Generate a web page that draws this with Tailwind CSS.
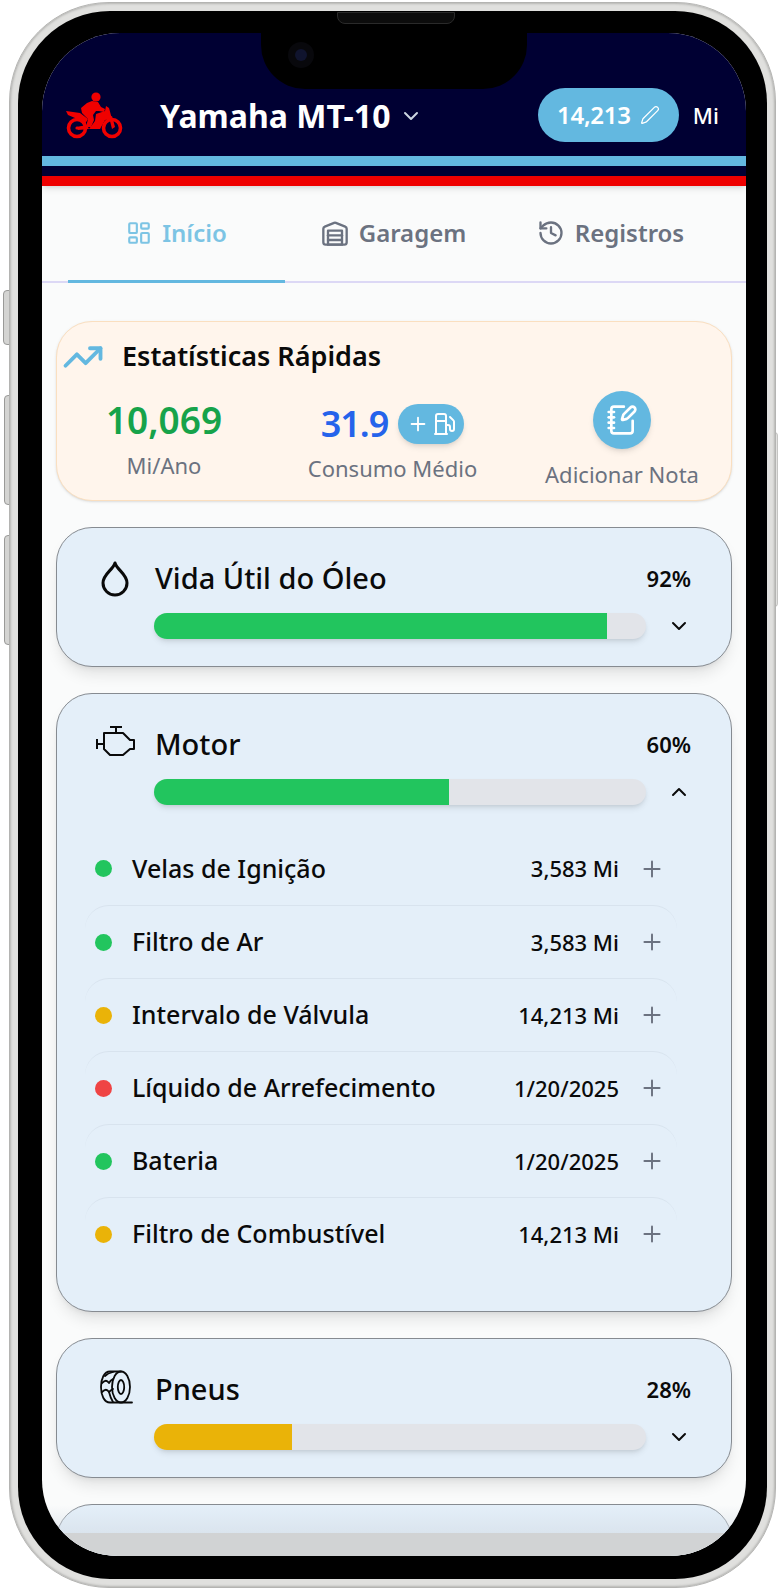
<!DOCTYPE html>
<html lang="pt-BR">
<head>
  <meta charset="UTF-8" />
  <title>Yamaha MT-10</title>
  <script src="https://cdn.jsdelivr.net/npm/@tailwindcss/browser@4"></script>
</head>
<body class="bg-white font-['Noto_Sans',sans-serif]">
<div class="relative w-[784px] h-[1590px] pl-[9px] pt-[2px] overflow-hidden">
  <!-- side buttons -->
  <div class="absolute left-[3px] top-[290px] w-[7px] h-[55px] rounded-l-sm bg-[#d4d4d2] border border-[#9a9a98]"></div>
  <div class="absolute left-[4px] top-[395px] w-[6px] h-[110px] rounded-l-sm bg-[#d4d4d2] border border-[#9a9a98]"></div>
  <div class="absolute left-[4px] top-[535px] w-[6px] h-[110px] rounded-l-sm bg-[#d4d4d2] border border-[#9a9a98]"></div>
  <div class="absolute left-[774px] top-[432px] w-[4px] h-[175px] rounded-r-sm bg-[#e2e2e0] border border-[#c4c4c2]"></div>

  <!-- phone -->
  <div class="relative w-[767px] h-[1586px] rounded-[100px] bg-[#e0e0de] border border-[#b4b4b2] p-[8px] shadow-[inset_0_0_3px_#8a8a88]">
    <div class="relative w-full h-full rounded-[92px] bg-black pl-[24px] pr-[21px] pt-[22px] pb-[23px]">
      <!-- speaker and notch -->
      <div class="absolute left-[319px] top-[1px] w-[118px] h-[12px] rounded-b-lg bg-[#0c0c0c] border border-[#2a2a2a] z-30"></div>
      <div class="absolute left-[243px] top-[22px] w-[266px] h-[56px] rounded-b-[44px] bg-black z-30"></div>
      <div class="absolute left-[270px] top-[31px] w-[26px] h-[26px] rounded-full bg-[#08080c] z-30 flex items-center justify-center">
        <div class="w-[12px] h-[12px] rounded-full bg-[#10142e]"></div>
      </div>

      <!-- screen -->
      <div class="relative w-full h-full rounded-t-[78px] rounded-b-[76px] overflow-hidden bg-[#fafbfb]">
        <header class="h-[123px] bg-[#000033] flex items-end pl-[17px] pr-[27px] pb-[14px]">
          <svg class="w-[70px] h-[55px] shrink-0" viewBox="0 0 70 55" fill="#f00000">
            <circle cx="37" cy="10" r="4.6"/>
            <path d="M33 14 L39 15 L42 20 L46 22 L45 25 L40 24 L37 24 L34 28 L35 33 L32 40 L27 40 L29 32 L23 26 L22 21 L28 16 Z"/>
            <path d="M37 27 L46 24 L47 19 L50 21 L53 32 L46 33 L41 42 L30 42 L36 34 Z"/>
            <path d="M7 24 L21 26 L29 32 L26 37 L16 31 L9 28 Z"/>
            <path d="M17 40 L28 38 L30 42 L19 43 Z"/>
            <circle cx="18" cy="41" r="8.5" fill="none" stroke="#f00000" stroke-width="3.6"/>
            <circle cx="53" cy="41" r="8.5" fill="none" stroke="#f00000" stroke-width="3.6"/>
            <circle cx="18" cy="41" r="1.6"/>
            <path d="M50 30 L53 29 L56 40 L53 42 Z"/>
          </svg>
          <div class="ml-[31px] h-[54px] -mb-[1px] flex items-center">
            <span class="text-[32px] leading-none font-bold text-white">Yamaha MT-10</span>
            <svg class="w-[24px] h-[24px] ml-[9px] text-[#cbd5e1]" viewBox="0 0 24 24" fill="none" stroke="currentColor" stroke-width="2" stroke-linecap="round" stroke-linejoin="round"><path d="m6 9 6 6 6-6"/></svg>
          </div>
          <div class="ml-auto flex items-center">
            <div class="w-[141px] h-[54px] rounded-full bg-[#63b8e0] flex items-center justify-center gap-[9px]">
              <span class="text-[24px] font-semibold text-white tracking-[-0.3px]">14,213</span>
              <svg class="w-[20px] h-[20px] text-white" viewBox="0 0 24 24" fill="none" stroke="currentColor" stroke-width="1.5" stroke-linecap="round" stroke-linejoin="round"><path d="M21.174 6.812a1 1 0 0 0-3.986-3.987L3.842 16.174a2 2 0 0 0-.5.83l-1.321 4.352a.5.5 0 0 0 .623.622l4.353-1.32a2 2 0 0 0 .83-.497z"/></svg>
            </div>
            <span class="ml-[14px] text-[22px] font-medium text-white">Mi</span>
          </div>
        </header>
        <div class="h-[10px] bg-[#63b8e0]"></div>
        <div class="h-[10px] bg-[#000033]"></div>
        <div class="h-[10px] bg-[#ee0000] shadow-md"></div>

        <nav class="h-[97px] flex pl-[26px] pr-[26px] pb-[2px] border-b-2 border-[#dcd8f5]">
          <div class="w-[217px] -mb-[4px] flex items-center justify-center gap-[10px] border-b-[3px] border-[#63b8e0] text-[#7cc4e4]">
            <svg class="w-[26px] h-[26px]" viewBox="0 0 24 24" fill="none" stroke="currentColor" stroke-width="2" stroke-linecap="round" stroke-linejoin="round"><rect width="7" height="9" x="3" y="3" rx="1"/><rect width="7" height="5" x="14" y="3" rx="1"/><rect width="7" height="9" x="14" y="12" rx="1"/><rect width="7" height="5" x="3" y="16" rx="1"/></svg>
            <span class="text-[24px] font-semibold">Início</span>
          </div>
          <div class="w-[217px] flex items-center justify-center gap-[10px] text-[#6b7280]">
            <svg class="w-[28px] h-[28px]" viewBox="0 0 24 24" fill="none" stroke="currentColor" stroke-width="2" stroke-linecap="round" stroke-linejoin="round"><path d="M22 8.35V20a2 2 0 0 1-2 2H4a2 2 0 0 1-2-2V8.35A2 2 0 0 1 3.26 6.5l8-3.2a2 2 0 0 1 1.48 0l8 3.2A2 2 0 0 1 22 8.35Z"/><path d="M6 18h12"/><path d="M6 14h12"/><rect width="12" height="12" x="6" y="10"/></svg>
            <span class="text-[24px] font-semibold">Garagem</span>
          </div>
          <div class="w-[217px] flex items-center justify-center gap-[10px] text-[#6b7280]">
            <svg class="w-[28px] h-[28px]" viewBox="0 0 24 24" fill="none" stroke="currentColor" stroke-width="2" stroke-linecap="round" stroke-linejoin="round"><path d="M3 12a9 9 0 1 0 9-9 9.75 9.75 0 0 0-6.74 2.74L3 8"/><path d="M3 3v5h5"/><path d="M12 7v5l4 2"/></svg>
            <span class="text-[24px] font-semibold">Registros</span>
          </div>
        </nav>

        <main class="px-[14px] pt-[38px] flex flex-col gap-[26px]">
          <!-- quick stats -->
          <section class="h-[180px] rounded-[36px] bg-[#fff5ec] border border-[#fadfc0] shadow-sm">
            <div class="flex items-center pl-[5px] pt-[13px] h-[56px]">
              <svg class="w-[42px] h-[42px] text-[#63b8e0]" viewBox="0 0 24 24" fill="none" stroke="currentColor" stroke-width="2.2" stroke-linecap="round" stroke-linejoin="round"><polyline points="22 7 13.5 15.5 8.5 10.5 2 17"/><polyline points="16 7 22 7 22 13"/></svg>
              <h2 class="ml-[18px] text-[27px] font-semibold text-[#0a0a0a]">Estatísticas Rápidas</h2>
            </div>
            <div class="grid grid-cols-[214px_243px_216px]">
              <div class="flex flex-col items-center pt-[15px]">
                <span class="text-[37px] font-semibold leading-[54px] text-[#16a34a]">10,069</span>
                <span class="mt-[2px] text-[22px] text-[#6b7280]">Mi/Ano</span>
              </div>
              <div class="flex flex-col items-center pt-[19px]">
                <div class="flex items-center h-[54px] gap-[10px]">
                  <span class="text-[36px] font-semibold tracking-[-1px] text-[#2563eb]">31.9</span>
                  <div class="w-[66px] h-[40px] rounded-full bg-[#63b8e0] shadow-md flex items-center justify-center gap-[3px] text-white">
                    <svg class="w-[22px] h-[22px]" viewBox="0 0 24 24" fill="none" stroke="currentColor" stroke-width="2" stroke-linecap="round"><path d="M5 12h14"/><path d="M12 5v14"/></svg>
                    <svg class="w-[24px] h-[24px]" viewBox="0 0 24 24" fill="none" stroke="currentColor" stroke-width="2" stroke-linecap="round" stroke-linejoin="round"><line x1="3" x2="15" y1="22" y2="22"/><line x1="4" x2="14" y1="9" y2="9"/><path d="M14 22V4a2 2 0 0 0-2-2H6a2 2 0 0 0-2 2v18"/><path d="M14 13h2a2 2 0 0 1 2 2v2a2 2 0 0 0 2 2a2 2 0 0 0 2-2V9.83a2 2 0 0 0-.59-1.42L18 5"/></svg>
                  </div>
                </div>
                <span class="mt-[1px] text-[22px] text-[#6b7280]">Consumo Médio</span>
              </div>
              <div class="flex flex-col items-center pt-[13px]">
                <div class="w-[58px] h-[58px] rounded-full bg-[#63b8e0] shadow-md flex items-center justify-center text-white">
                  <svg class="w-[32px] h-[32px]" viewBox="0 0 24 24" fill="none" stroke="currentColor" stroke-width="2" stroke-linecap="round" stroke-linejoin="round"><path d="M13.4 2H6a2 2 0 0 0-2 2v16a2 2 0 0 0 2 2h12a2 2 0 0 0 2-2v-7.4"/><path d="M2 6h4"/><path d="M2 10h4"/><path d="M2 14h4"/><path d="M2 18h4"/><path d="M21.378 5.626a1 1 0 1 0-3.004-3.004l-5.01 5.012a2 2 0 0 0-.506.854l-.837 2.87a.5.5 0 0 0 .62.62l2.87-.837a2 2 0 0 0 .854-.506z"/></svg>
                </div>
                <span class="mt-[9px] text-[22px] text-[#6b7280]">Adicionar Nota</span>
              </div>
            </div>
          </section>

          <!-- oil -->
          <section class="h-[140px] rounded-[36px] bg-[#e4eff9] border border-[#868b91] shadow-lg pl-[34px] pr-[33px] pt-[30px]">
            <div class="flex items-center h-[40px]">
              <svg class="w-[60px] h-[50px] -ml-[1px] shrink-0 text-[#0a0a0a]" viewBox="0 0 60 50" fill="none" stroke="currentColor" stroke-width="3" stroke-linejoin="round"><path d="M25 10 C27 17 37 21 37 30 A12 12 0 0 1 13 30 C13 21 23 17 25 10Z"/></svg>
              <h3 class="ml-[5px] text-[29px] font-medium text-[#0a0a0a]">Vida Útil do Óleo</h3>
              <span class="ml-auto mr-[7px] text-[22px] font-semibold text-[#0a0a0a]">92%</span>
            </div>
            <div class="flex items-center mt-[15px] pl-[63px]">
              <div class="w-[492px] h-[26px] rounded-full bg-[#e2e4e9] shadow-md overflow-hidden"><div class="h-full bg-[#22c55e]" style="width:92%"></div></div>
              <svg class="ml-[21px] w-[24px] h-[24px] text-[#0a0a0a]" viewBox="0 0 24 24" fill="none" stroke="currentColor" stroke-width="2" stroke-linecap="round" stroke-linejoin="round"><path d="m6 9 6 6 6-6"/></svg>
            </div>
          </section>

          <!-- engine -->
          <section class="h-[619px] rounded-[36px] bg-[#e4eff9] border border-[#868b91] shadow-lg pl-[34px] pr-[33px] pt-[30px]">
            <div class="flex items-center h-[40px]">
              <svg class="w-[60px] h-[50px] -ml-[1px] shrink-0 text-[#0a0a0a]" viewBox="0 0 60 50" fill="none" stroke="currentColor" stroke-width="2" stroke-linejoin="round"><path d="M20 8h12M26 8v6"/><path d="M7 20v10M7 25h7"/><path d="M14 14h19l7 7h4v9h-4l-7 6H20l-6-6z"/></svg>
              <h3 class="ml-[5px] text-[29px] font-medium text-[#0a0a0a]">Motor</h3>
              <span class="ml-auto mr-[7px] text-[22px] font-semibold text-[#0a0a0a]">60%</span>
            </div>
            <div class="flex items-center mt-[15px] pl-[63px]">
              <div class="w-[492px] h-[26px] rounded-full bg-[#e2e4e9] shadow-md overflow-hidden"><div class="h-full bg-[#22c55e]" style="width:60%"></div></div>
              <svg class="ml-[21px] w-[24px] h-[24px] text-[#0a0a0a]" viewBox="0 0 24 24" fill="none" stroke="currentColor" stroke-width="2" stroke-linecap="round" stroke-linejoin="round"><path d="m18 15-6-6-6 6"/></svg>
            </div>
            <ul class="mt-[27px] -ml-[6px] w-[592px] flex flex-col">
              <li class="h-[73px] flex items-center pl-[10px] pr-[12px]">
                <span class="w-[17px] h-[17px] rounded-full bg-[#22c55e]"></span>
                <span class="ml-[20px] text-[25px] font-medium text-[#0a0a0a]">Velas de Ignição</span>
                <span class="ml-auto text-[22px] font-medium text-[#0a0a0a]">3,583 Mi</span>
                <svg class="ml-[20px] w-[26px] h-[26px] text-[#6b7280]" viewBox="0 0 24 24" fill="none" stroke="currentColor" stroke-width="1.8" stroke-linecap="round"><path d="M5 12h14"/><path d="M12 5v14"/></svg>
              </li>
              <li class="h-[73px] flex items-center pl-[10px] pr-[12px] border-t border-[#d8e3ee] rounded-3xl">
                <span class="w-[17px] h-[17px] rounded-full bg-[#22c55e]"></span>
                <span class="ml-[20px] text-[25px] font-medium text-[#0a0a0a]">Filtro de Ar</span>
                <span class="ml-auto text-[22px] font-medium text-[#0a0a0a]">3,583 Mi</span>
                <svg class="ml-[20px] w-[26px] h-[26px] text-[#6b7280]" viewBox="0 0 24 24" fill="none" stroke="currentColor" stroke-width="1.8" stroke-linecap="round"><path d="M5 12h14"/><path d="M12 5v14"/></svg>
              </li>
              <li class="h-[73px] flex items-center pl-[10px] pr-[12px] border-t border-[#d8e3ee] rounded-3xl">
                <span class="w-[17px] h-[17px] rounded-full bg-[#eab308]"></span>
                <span class="ml-[20px] text-[25px] font-medium text-[#0a0a0a]">Intervalo de Válvula</span>
                <span class="ml-auto text-[22px] font-medium text-[#0a0a0a]">14,213 Mi</span>
                <svg class="ml-[20px] w-[26px] h-[26px] text-[#6b7280]" viewBox="0 0 24 24" fill="none" stroke="currentColor" stroke-width="1.8" stroke-linecap="round"><path d="M5 12h14"/><path d="M12 5v14"/></svg>
              </li>
              <li class="h-[73px] flex items-center pl-[10px] pr-[12px] border-t border-[#d8e3ee] rounded-3xl">
                <span class="w-[17px] h-[17px] rounded-full bg-[#ef4444]"></span>
                <span class="ml-[20px] text-[25px] font-medium text-[#0a0a0a]">Líquido de Arrefecimento</span>
                <span class="ml-auto text-[22px] font-medium text-[#0a0a0a]">1/20/2025</span>
                <svg class="ml-[20px] w-[26px] h-[26px] text-[#6b7280]" viewBox="0 0 24 24" fill="none" stroke="currentColor" stroke-width="1.8" stroke-linecap="round"><path d="M5 12h14"/><path d="M12 5v14"/></svg>
              </li>
              <li class="h-[73px] flex items-center pl-[10px] pr-[12px] border-t border-[#d8e3ee] rounded-3xl">
                <span class="w-[17px] h-[17px] rounded-full bg-[#22c55e]"></span>
                <span class="ml-[20px] text-[25px] font-medium text-[#0a0a0a]">Bateria</span>
                <span class="ml-auto text-[22px] font-medium text-[#0a0a0a]">1/20/2025</span>
                <svg class="ml-[20px] w-[26px] h-[26px] text-[#6b7280]" viewBox="0 0 24 24" fill="none" stroke="currentColor" stroke-width="1.8" stroke-linecap="round"><path d="M5 12h14"/><path d="M12 5v14"/></svg>
              </li>
              <li class="h-[73px] flex items-center pl-[10px] pr-[12px] border-t border-[#d8e3ee] rounded-3xl">
                <span class="w-[17px] h-[17px] rounded-full bg-[#eab308]"></span>
                <span class="ml-[20px] text-[25px] font-medium text-[#0a0a0a]">Filtro de Combustível</span>
                <span class="ml-auto text-[22px] font-medium text-[#0a0a0a]">14,213 Mi</span>
                <svg class="ml-[20px] w-[26px] h-[26px] text-[#6b7280]" viewBox="0 0 24 24" fill="none" stroke="currentColor" stroke-width="1.8" stroke-linecap="round"><path d="M5 12h14"/><path d="M12 5v14"/></svg>
              </li>
            </ul>
          </section>

          <!-- tires -->
          <section class="h-[140px] rounded-[36px] bg-[#e4eff9] border border-[#868b91] shadow-lg pl-[34px] pr-[33px] pt-[30px]">
            <div class="flex items-center h-[40px]">
              <svg class="w-[60px] h-[50px] -ml-[1px] shrink-0 text-[#0a0a0a]" viewBox="0 0 60 50" fill="none" stroke="currentColor" stroke-width="1.8" stroke-linecap="round" stroke-linejoin="round"><ellipse cx="31" cy="23" rx="9" ry="15.5"/><ellipse cx="31" cy="23" rx="3.2" ry="7"/><path d="M31 7.5H20C14 7.5 11 15 11 23S14 38.5 20 38.5H42"/><path d="M12 19C15 16 17 16 19 19C20 17 21 16 23 15"/><path d="M12 28C15 25 17 25 19 28C20 27 21 26 23 25"/><path d="M15 12C17 10 19 9 23 8"/><path d="M19 28C20 32 21 35 23 38"/></svg>
              <h3 class="ml-[5px] text-[29px] font-medium text-[#0a0a0a]">Pneus</h3>
              <span class="ml-auto mr-[7px] text-[22px] font-semibold text-[#0a0a0a]">28%</span>
            </div>
            <div class="flex items-center mt-[15px] pl-[63px]">
              <div class="w-[492px] h-[26px] rounded-full bg-[#e2e4e9] shadow-md overflow-hidden"><div class="h-full bg-[#eab308]" style="width:28%"></div></div>
              <svg class="ml-[21px] w-[24px] h-[24px] text-[#0a0a0a]" viewBox="0 0 24 24" fill="none" stroke="currentColor" stroke-width="2" stroke-linecap="round" stroke-linejoin="round"><path d="m6 9 6 6 6-6"/></svg>
            </div>
          </section>

          <section class="h-[140px] rounded-[36px] bg-[#e4eff9] border border-[#868b91]"></section>
        </main>

        <!-- bottom bar over the page -->
        <div class="absolute left-0 right-0 bottom-[23px] h-[28px] bg-gradient-to-b from-transparent to-[#d4dde6]/60"></div>
        <div class="absolute left-0 right-0 bottom-0 h-[23px] bg-[#d1d3d4]"></div>
      </div>
    </div>
  </div>
</div>
</body>
</html>
